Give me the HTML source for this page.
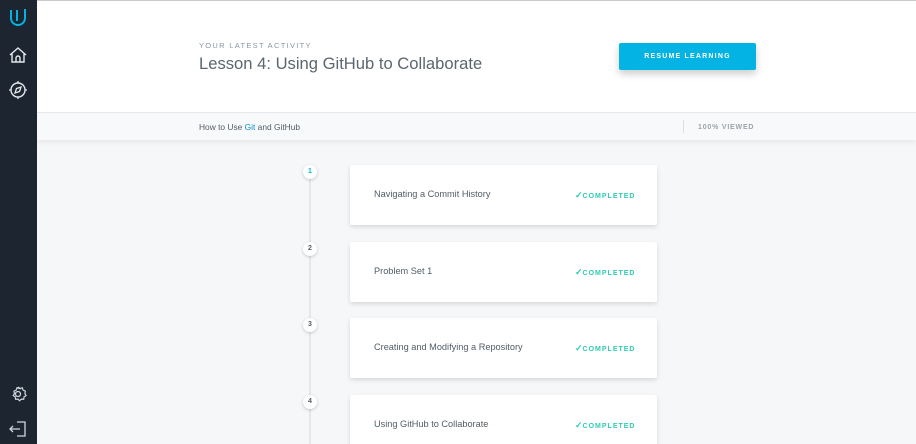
<!DOCTYPE html>
<html style="overflow:hidden;width:916px;height:444px"><head><style>
*{margin:0;padding:0;box-sizing:border-box}
body{width:916px;height:444px;overflow:hidden;background:#f6f7f9;font-family:"Liberation Sans",sans-serif;position:relative}
.side{position:absolute;left:0;top:0;width:37px;height:444px;background:#1d2630}
.top{position:absolute;left:37px;top:0;right:0;height:112px;background:#fff;border-top:1px solid #c8cacc}
.sub{position:absolute;left:37px;top:112px;right:0;height:28px;background:#f8f9fb;border-top:1px solid #e6e8eb;box-shadow:0 3px 5px rgba(0,0,0,.06)}
.lbl{position:absolute;left:199px;top:41px;font-size:7.5px;letter-spacing:1.3px;color:#8a96a2}
.ttl{position:absolute;left:199px;top:54px;font-size:16.6px;color:#5b6670;font-weight:300}
.btn{position:absolute;left:619px;top:43px;width:137px;height:27px;background:#02b3e4;border-radius:2px;color:#fff;font-size:7px;font-weight:bold;letter-spacing:1.2px;text-align:center;line-height:27px;box-shadow:0 4px 8px rgba(0,0,0,.2)}
.crumb{position:absolute;left:199px;top:122px;font-size:8.4px;color:#525c65}
.vsep{position:absolute;left:683px;top:120px;width:1px;height:13px;background:#dde0e3}
.view{position:absolute;left:698px;top:124px;font-size:7px;font-weight:bold;letter-spacing:.8px;color:#9aa3ab}
.line{position:absolute;left:309px;top:172px;width:2px;height:272px;background:#e5e7ea}
.num{position:absolute;left:303px;width:14px;height:14px;border-radius:50%;background:#fff;box-shadow:0 1px 3px rgba(0,0,0,.2);font-size:7px;text-align:center;line-height:14px;color:#525c65;font-weight:bold}
.card{position:absolute;left:350px;width:307px;height:60px;background:#fff;border-radius:2px;box-shadow:0 2px 5px rgba(0,0,0,.13)}
.card .t{position:absolute;left:24px;top:24px;font-size:9.2px;color:#525c65}
.card .c{position:absolute;left:225px;top:25px;font-size:7px;letter-spacing:1px;color:#2ecdb0;font-weight:bold}
.card .c b{font-size:9px;letter-spacing:0}
</style></head><body>
<div class="side">
<svg width="37" height="444" viewBox="0 0 37 444">
<path d="M11 10v8a7 7 0 0 0 14 0v-9" fill="none" stroke="#02b3e4" stroke-width="2"/>
<path d="M17 10v11" stroke="#02b3e4" stroke-width="2"/>
<path d="M10 55l8-7 8 7M12 53v9h12v-9M16 62v-4a2 2 0 0 1 4 0v4" fill="none" stroke="#e5e9ee" stroke-width="1.4"/>
<circle cx="18" cy="90" r="7" fill="none" stroke="#e5e9ee" stroke-width="1.4"/>
<path d="M18 81v2M18 97v2M9 90h2M25 90h2M15 93l1.5-4.5 4.5-1.5-1.5 4.5z" fill="none" stroke="#e5e9ee" stroke-width="1.3"/>
<circle cx="18" cy="394" r="2.5" fill="none" stroke="#cfd5dc" stroke-width="1.3"/>
<path d="M18 387l2 1.5 2.3-.7.8 2.3 2.2 1-.4 2.4 1.2 2.1-2 1.2-.4 2.4-2.4-.1-1.7 1.7-1.6-1.7-2.4.1-.4-2.4-2-1.2 1.2-2.1-.4-2.4 2.2-1 .8-2.3 2.3.7z" fill="none" stroke="#cfd5dc" stroke-width="1.2"/>
<path d="M17 422h8v14h-8M10 429h10M13 426l-3 3 3 3" fill="none" stroke="#cfd5dc" stroke-width="1.3"/>
</svg>
</div>
<div class="top"></div>
<div class="lbl">YOUR LATEST ACTIVITY</div>
<div class="ttl">Lesson 4: Using GitHub to Collaborate</div>
<div class="btn">RESUME LEARNING</div>
<div class="sub"></div>
<div class="crumb">How to Use <span style="color:#0b8fc4">Git</span> and GitHub</div>
<div class="vsep"></div>
<div class="view">100% VIEWED</div>
<div class="line"></div>
<div class="num" style="top:165px;color:#02b3e4">1</div>
<div class="num" style="top:242px">2</div>
<div class="num" style="top:318px">3</div>
<div class="num" style="top:395px">4</div>
<div class="card" style="top:165px"><div class="t">Navigating a Commit History</div><div class="c"><b>✓</b>COMPLETED</div></div>
<div class="card" style="top:242px"><div class="t">Problem Set 1</div><div class="c"><b>✓</b>COMPLETED</div></div>
<div class="card" style="top:318px"><div class="t">Creating and Modifying a Repository</div><div class="c"><b>✓</b>COMPLETED</div></div>
<div class="card" style="top:395px"><div class="t">Using GitHub to Collaborate</div><div class="c"><b>✓</b>COMPLETED</div></div>
</body></html>
